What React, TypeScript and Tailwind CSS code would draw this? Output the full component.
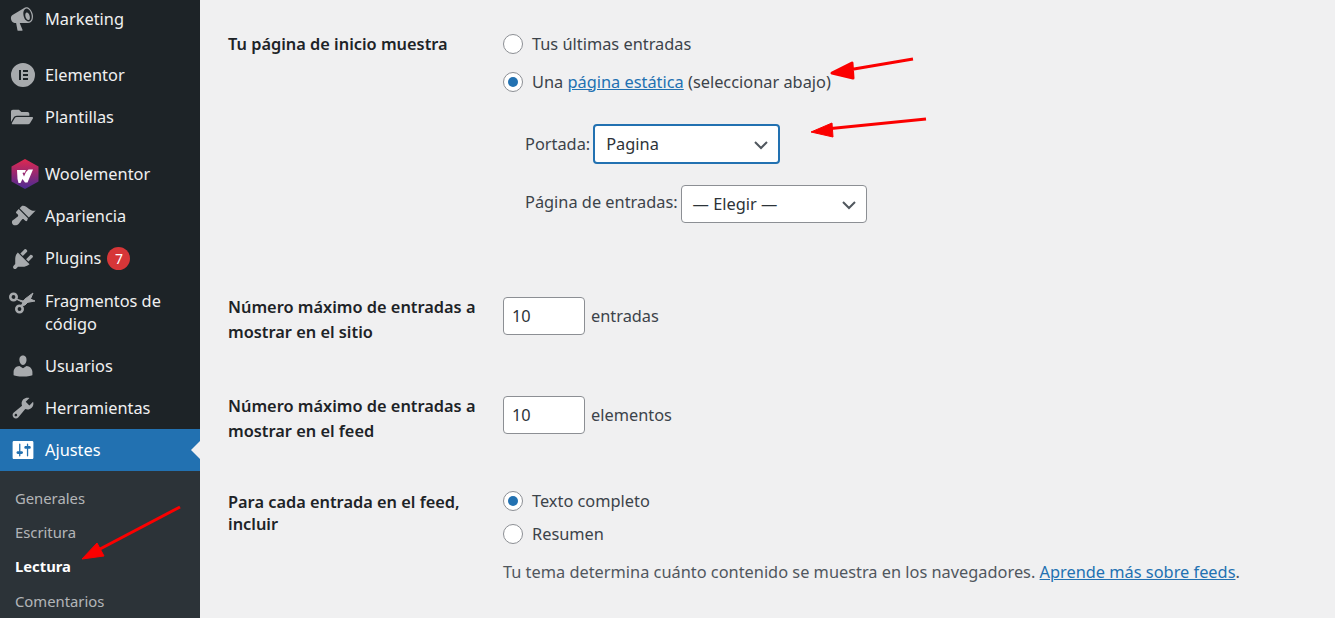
import React from "react";
import { FaFolderOpen } from "react-icons/fa";

const Dash = ({ d, className = "" }: { d: string; className?: string }) => (
  <svg viewBox="0 0 20 20" className={`w-[26px] h-[26px] fill-current ${className}`}><path d={d} fillRule="evenodd" /></svg>
);

const megaphone = "M18.15 5.94c.46 1.62.38 3.22-.02 4.48-.42 1.28-1.26 2.18-2.3 2.48-.16.06-.26.06-.4.06-.06.02-.12.02-.18.02-.06.02-.14.02-.22.02h-6.8l2.22 5.5c.02.14-.06.26-.14.34-.08.1-.24.16-.34.16H6.95c-.1 0-.26-.06-.34-.16-.08-.08-.16-.2-.14-.34l-1-5.5H4.25l-.02-.02c-.5.06-1.08-.18-1.54-.62s-.88-1.08-1.06-1.88c-.24-.8-.2-1.56-.02-2.2.2-.62.58-1.08 1.06-1.3l.02-.02 9-5.4c.1-.06.18-.1.24-.16.06-.04.14-.08.24-.12.16-.08.28-.12.5-.18 1.04-.3 2.24.1 3.22 1 .98.88 1.8 2.24 2.26 3.86zm-2.58 5.98c.4-.1.74-.34 1.04-.7.58-.7.86-1.76.86-3.04 0-.64-.1-1.3-.28-1.98-.34-1.36-1.02-2.5-1.78-3.24s-1.68-1.1-2.46-.88c-.82.22-1.4.96-1.7 2-.32 1.04-.28 2.36.06 3.72.38 1.36 1 2.5 1.8 3.24.78.74 1.62 1.1 2.46.88zM13.5 5c.9-.25 2 .9 2.4 2.6.4 1.6.1 3-.8 3.2-.9.25-2-.9-2.4-2.5-.4-1.7-.1-3.1.8-3.3z";
const brush = "M14.48 11.06L7.41 3.99l1.5-1.5c.5-.56 2.3-.47 3.51.32 1.21.8 1.43 1.28 2.91 2.1 1.18.64 2.45 1.26 4.45.85zm-.71.71L6.7 4.7 4.93 6.47c-.39.39-.39 1.02 0 1.41l1.06 1.06c.39.39.39 1.03 0 1.42-.6.6-1.43 1.11-2.21 1.69-.35.26-.7.53-1.01.84C1.43 13.23.99 15.24 2.2 16.45s3.22.77 4.55-.57c.31-.31.58-.66.84-1.01.58-.78 1.09-1.61 1.69-2.21.39-.39 1.03-.39 1.42 0l1.06 1.06c.39.39 1.02.39 1.41 0z";
const plug = "M13.11 4.36L9.87 7.6 8 5.73l3.24-3.24c.35-.34 1.05-.2 1.56.32.52.51.66 1.21.31 1.55zm-8 1.77l.91-1.12 9.01 9.01-1.19.84c-.71.71-2.63 1.16-3.82 1.16H6.14L4.9 17.26c-.59.59-1.54.59-2.12 0-.59-.58-.59-1.53 0-2.12l1.24-1.24v-3.88c0-1.13.4-3.19 1.09-3.89zm7.26 3.97l3.24-3.24c.34-.35 1.04-.21 1.55.31.52.51.66 1.21.31 1.55l-3.24 3.25z";
const user = "M10 9.25c-2.27 0-2.73-3.44-2.73-3.44C7 4.02 7.82 2 9.97 2c2.16 0 2.98 2.02 2.71 3.81 0 0-.41 3.44-2.68 3.44zm0 2.57L12.72 10c2.39 0 4.52 2.33 4.52 4.53v2.49s-3.65 1.13-7.24 1.13c-3.65 0-7.24-1.13-7.24-1.13v-2.49c0-2.25 1.94-4.48 4.47-4.48z";
const wrench = "M16.68 9.77c-1.34 1.34-3.3 1.67-4.95.99l-5.41 6.52c-.99.99-2.59.99-3.58 0s-.99-2.59 0-3.57l6.52-5.42c-.68-1.65-.35-3.61.99-4.95 1.28-1.28 3.12-1.62 4.72-1.06l-2.89 2.89 2.82 2.82 2.86-2.87c.53 1.58.18 3.39-1.08 4.65zM3.81 16.21c.4.39 1.04.39 1.43 0 .4-.4.4-1.04 0-1.43-.39-.4-1.03-.4-1.43 0-.39.39-.39 1.03 0 1.43z";
const settings = "M18 16V4c0-.55-.45-1-1-1H3c-.55 0-1 .45-1 1v12c0 .55.45 1 1 1h14c.55 0 1-.45 1-1zM8 11h1c.55 0 1 .45 1 1s-.45 1-1 1H8v1.5c0 .28-.22.5-.5.5s-.5-.22-.5-.5V13H6c-.55 0-1-.45-1-1s.45-1 1-1h1V5.5c0-.28.22-.5.5-.5s.5.22.5.5V11zm5-2h-1c-.55 0-1-.45-1-1s.45-1 1-1h1V5.5c0-.28.22-.5.5-.5s.5.22.5.5V7h1c.55 0 1 .45 1 1s-.45 1-1 1h-1v5.5c0 .28-.22.5-.5.5s-.5-.22-.5-.5V9z";

const Item = ({ icon, children, className = "" }: { icon: React.ReactNode; children: React.ReactNode; className?: string }) => (
  <div className={`flex items-center text-[#f0f0f1] ${className || "h-[42.5px]"}`}>
    <div className="w-[45px] shrink-0 pl-[10px] flex items-center text-[#a7aaad]">{icon}</div>
    <div>{children}</div>
  </div>
);

const Chevron = () => (
  <svg viewBox="0 0 16 16" className="w-4 h-4 fill-none stroke-[#50575e] stroke-2"><path d="M2 5l6 6 6-6" /></svg>
);

const Radio = ({ on }: { on?: boolean }) => (
  <div className="w-5 h-5 rounded-full border border-[#8c8f94] bg-white flex items-center justify-center shrink-0">
    {on && <div className="w-[10px] h-[10px] rounded-full bg-[#2271b1]" />}
  </div>
);

const Num = () => (
  <div className="w-[82px] h-[38px] bg-white border border-[#8c8f94] rounded-[4px] flex items-center pl-2 text-[#2c3338]">10</div>
);

const Label = ({ children, className }: { children: React.ReactNode; className: string }) => (
  <div className={`w-[275px] shrink-0 font-semibold text-[#1d2327] ${className}`}>{children}</div>
);

export default function App() {
  return (
    <div className="relative flex h-[618px] w-[1335px] overflow-hidden bg-[#f0f0f1] text-[16.35px] text-[#3c434a] font-['Noto_Sans','Open_Sans',sans-serif]">
      <aside className="w-[200px] shrink-0 bg-[#1d2327] flex flex-col">
        <Item className="h-[42.5px] -mt-[2px]" icon={<Dash d={megaphone} className="-ml-[1px]" />}>Marketing</Item>
        <Item className="h-[42.5px] mt-[14px]" icon={
          <svg viewBox="0 0 24 24" className="w-[24px] h-[24px] ml-[1px]"><path className="fill-[#a7aaad]" fillRule="evenodd" d="M12 0a12 12 0 1 0 0 24 12 12 0 0 0 0-24zM8 7h2v10H8zm4 0h5v2h-5zm0 4h5v2h-5zm0 4h5v2h-5z" /></svg>
        }>Elementor</Item>
        <Item icon={<FaFolderOpen className="w-[22px] h-[22px] ml-[1px]" />}>Plantillas</Item>
        <Item className="h-[42.5px] mt-[15px]" icon={
          <svg viewBox="0 0 28 30" className="w-[28px] h-[30px] ml-[1px]">
            <defs><linearGradient id="wg" x1="0" y1="0" x2="0" y2="1"><stop offset="0" stopColor="#e0284f" /><stop offset="1" stopColor="#4a2a95" /></linearGradient></defs>
            <path d="M14 0l13.500 7.500v15L14 30 .5 22.500v-15z" fill="url(#wg)" />
            <path d="M6 11h9l-1.500 3-1-.5-1 .5 1.500 3.500 2-4.500 2.500-2.500h4.500l-5.500 13h-2.500L11.500 20l-2 4H7.500l-1-4z" fill="#fff" />
          </svg>
        }>Woolementor</Item>
        <Item icon={<Dash d={brush} />}>Apariencia</Item>
        <Item className="h-[43.5px] pt-[1px]" icon={<Dash d={plug} />}>
          <span className="flex items-center gap-[6px]">Plugins
            <span className="w-[23px] h-[23px] rounded-full bg-[#d63638] text-white text-[14px] flex items-center justify-center">7</span>
          </span>
        </Item>
        <div className="flex h-[66px] items-start text-[#f0f0f1] pt-[10px] leading-[23px]">
          <div className="w-[45px] shrink-0 pl-[9px] text-[#a7aaad]">
            <svg viewBox="0 0 27 24" className="w-[27px] h-[24px] fill-none stroke-current">
              <circle cx="4.500" cy="7" r="3.200" strokeWidth="2.600" />
              <circle cx="10.500" cy="19" r="3.200" strokeWidth="2.600" />
              <path d="M7 9l8 4 11-2-7-3-5 3z" fill="currentColor" strokeWidth="1" strokeLinejoin="round" />
              <path d="M12 16l4-7 8-6-3 7-5 5z" fill="currentColor" strokeWidth="1" strokeLinejoin="round" />
            </svg>
          </div>
          <div>Fragmentos de<br />código</div>
        </div>
        <Item icon={<Dash d={user} />}>Usuarios</Item>
        <Item icon={<Dash d={wrench} />}>Herramientas</Item>
        <div className="relative">
          <Item className="h-[42.5px] bg-[#2271b1] text-white" icon={<Dash d={settings} className="text-white" />}>Ajustes</Item>
          <div className="absolute right-0 top-[12px] border-y-[9px] border-r-[9px] border-y-transparent border-r-[#f0f0f1]" />
        </div>
        <div className="flex-1 bg-[#2c3338] pt-[9px] pl-[15px] text-[14.8px] text-[#f0f0f1b3]">
          <div className="h-[34.4px] flex items-center">Generales</div>
          <div className="h-[34.4px] flex items-center">Escritura</div>
          <div className="h-[34.4px] flex items-center font-bold text-white">Lectura</div>
          <div className="h-[34.4px] flex items-center">Comentarios</div>
        </div>
      </aside>

      <main className="flex-1 pl-[28px] pt-[32px]">
        <div className="flex h-[265px]">
          <Label className="leading-[25px]">Tu página de inicio muestra</Label>
          <div>
            <div className="flex items-center gap-[9px] h-[24px]"><Radio />Tus últimas entradas</div>
            <div className="flex items-center gap-[9px] h-[24px] mt-[14px]"><Radio on /><span>Una <span className="text-[#2271b1] underline">página estática</span> (seleccionar abajo)</span></div>
            <div className="flex items-center gap-[3px] ml-[22px] mt-[30px]">
              <span>Portada:</span>
              <div className="w-[187px] h-[40px] bg-white border-2 border-[#2271b1] rounded-[4px] flex items-center justify-between pl-[11px] pr-[9px] pt-[1px] text-[#2c3338]">Pagina<Chevron /></div>
            </div>
            <div className="flex items-center gap-[3px] ml-[22px] mt-[21px]">
              <span className="-mt-[4px]">Página de entradas:</span>
              <div className="w-[186px] h-[38px] bg-white border border-[#8c8f94] rounded-[4px] flex items-center justify-between pl-[11px] pr-[9px] pt-[1px] text-[#2c3338]">— Elegir —<Chevron /></div>
            </div>
          </div>
        </div>
        <div className="flex h-[99px]">
          <Label className="leading-[25px] -mt-[2px]">Número máximo de entradas a mostrar en el sitio</Label>
          <div className="flex items-center gap-[6px] h-[38px]"><Num />entradas</div>
        </div>
        <div className="flex h-[94px]">
          <Label className="leading-[25px] -mt-[2px]">Número máximo de entradas a mostrar en el feed</Label>
          <div className="flex items-center gap-[6px] h-[38px]"><Num />elementos</div>
        </div>
        <div className="flex -mt-[1px]">
          <Label className="leading-[22px] mt-[2px]">Para cada entrada en el feed, incluir</Label>
          <div>
            <div className="flex items-center gap-[9px] h-[24px]"><Radio on />Texto completo</div>
            <div className="flex items-center gap-[9px] h-[24px] mt-[9px]"><Radio />Resumen</div>
            <div className="mt-[14px] text-[#50575e]">Tu tema determina cuánto contenido se muestra en los navegadores. <span className="text-[#2271b1] underline">Aprende más sobre feeds</span>.</div>
          </div>
        </div>
      </main>

      <svg className="absolute inset-0 pointer-events-none" width="1335" height="618">
        <g fill="#fb0000" stroke="#fb0000" strokeLinejoin="round">
          <path d="M913 59l-62 10.500M832 73l20-10 1 15z" strokeWidth="3" />
          <path d="M926 119l-95 9.500" strokeWidth="3" />
          <path d="M811 132l21-9 1 14z" strokeWidth="1" />
          <path d="M180 507L100 549" strokeWidth="3" />
          <path d="M82 559l15-16 7 13z" strokeWidth="1" />
        </g>
      </svg>
    </div>
  );
}
